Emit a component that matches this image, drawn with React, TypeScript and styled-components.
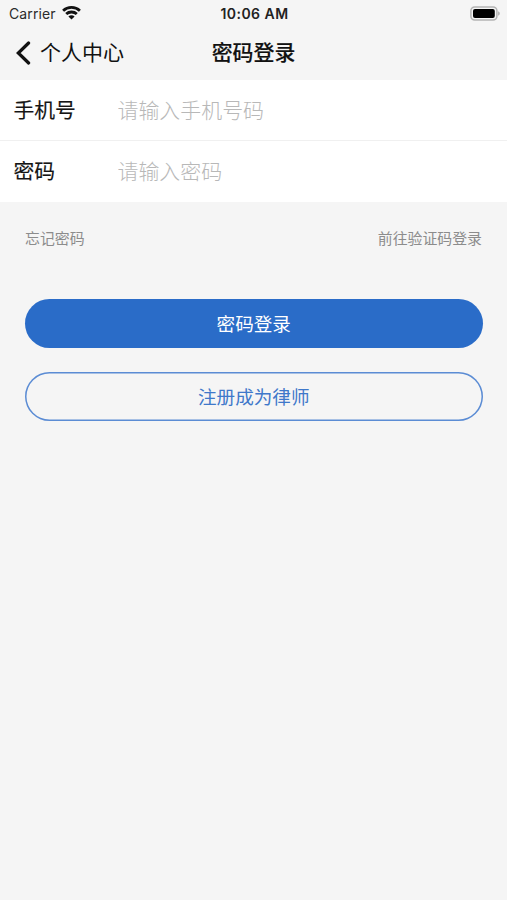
import React from "react";
import styled, { createGlobalStyle } from "styled-components";

const GlobalStyle = createGlobalStyle`
  *, *::before, *::after { box-sizing: border-box; }
  body {
    margin: 0;
    background: #f5f5f5;
    color: #151515;
    font-family: "Inter", "Noto Sans CJK SC", sans-serif;
  }
  button, input { font: inherit; }
`;

const Screen = styled.main`
  width: 100%;
  min-height: 900px;
  overflow: hidden;
  background: #f5f5f5;
`;

const StatusBar = styled.header`
  display: grid;
  grid-template-columns: 1fr auto 1fr;
  align-items: center;
  height: 27px;
  padding: 0 7px 0 9px;
`;

const Carrier = styled.div`
  display: flex;
  align-items: center;
  gap: 6px;
  font-size: 14px;
  line-height: 27px;
  letter-spacing: 0.1px;
  color: #2b2b2b;
  svg { margin-top: -1px; }
`;

const Clock = styled.time`
  padding-top: 1px;
  font-size: 14px;
  font-weight: 600;
  line-height: 26px;
  letter-spacing: 0.45px;
  color: #222;
`;

const BatteryIcon = styled.svg`
  display: block;
  justify-self: end;
`;

const NavBar = styled.nav`
  display: grid;
  grid-template-columns: 1fr auto 1fr;
  align-items: center;
  height: 53px;
  padding: 0 16px 1px;
`;

const BackButton = styled.button`
  display: flex;
  align-items: center;
  gap: 9px;
  padding: 0;
  border: 0;
  background: none;
  color: #111;
  font-size: 21px;
  line-height: 30px;
  svg { margin-top: -1px; }
`;

const Title = styled.h1`
  margin: 0;
  font-size: 20.9px;
  font-weight: 500;
  line-height: 30px;
  color: #111;
  -webkit-text-stroke: 0.15px currentColor;
`;

const Form = styled.form`
  background: #f5f5f5;
`;

const Fields = styled.div`
  background: #fff;
`;

const Field = styled.label`
  display: flex;
  align-items: center;
  height: 60px;
  padding-left: 13.5px;
  & + & {
    height: 62px;
    border-top: 1px solid #f0f0f0;
  }
`;

const FieldName = styled.span`
  width: 104px;
  font-size: 20.8px;
  line-height: 31px;
  -webkit-text-stroke: 0.15px currentColor;
`;

const FieldInput = styled.input`
  flex: 1;
  min-width: 0;
  height: 40px;
  padding: 0;
  border: 0;
  outline: 0;
  background: transparent;
  font-size: 20.95px;
  font-weight: 300;
  &::placeholder { color: #b8b8b8; opacity: 1; }
`;

const Links = styled.div`
  display: flex;
  justify-content: space-between;
  padding: 26px 25px 0;
`;

const TextLink = styled.a`
  font-size: 14.9px;
  line-height: 22px;
  color: #8c8c8c;
  text-decoration: none;
`;

const Actions = styled.div`
  display: flex;
  flex-direction: column;
  gap: 24px;
  padding: 49px 24.5px 0 25px;
`;

const ActionButton = styled.button<{ $filled?: boolean }>`
  height: 49px;
  padding: 0;
  border: 0;
  border-radius: 25px;
  background: ${({ $filled }) => ($filled ? "#2a6cc8" : "transparent")};
  box-shadow: ${({ $filled }) => ($filled ? "none" : "inset 0 0 0 1.5px #5b8cd4")};
  color: ${({ $filled }) => ($filled ? "#fff" : "#3f78ca")};
  font-size: 18.6px;
  line-height: 28px;
`;

const WifiIcon = () => (
  <svg width="19" height="16" viewBox="0 0 19 16" fill="none" stroke="#111" strokeWidth="2.8">
    <path d="M1.1 5.7C5.7 1.3 13.3 1.3 17.9 5.7" />
    <path d="M4.2 9.1c2.9-2.8 7.7-2.8 10.6 0" />
    <path d="M9.5 14.5 6.4 11.4c1.7-1.6 4.5-1.6 6.2 0Z" fill="#111" stroke="none" />
  </svg>
);

const ChevronIcon = () => (
  <svg width="15" height="24" viewBox="0 0 15 24" fill="none" stroke="#111" strokeWidth="3.2" strokeLinecap="round">
    <path d="M12.6 2 2.3 12 12.6 22" />
  </svg>
);

export default function App() {
  return (
    <Screen>
      <GlobalStyle />
      <StatusBar>
        <Carrier>
          Carrier
          <WifiIcon />
        </Carrier>
        <Clock>10:06 AM</Clock>
        <BatteryIcon width="30" height="15" viewBox="0 0 30 15">
          <rect x="0.9" y="1" width="26" height="13" rx="3.8" fill="#f5f5f5" stroke="#b4b4b4" strokeWidth="1.5" />
          <rect x="3" y="3" width="21.8" height="9" rx="2" fill="#000" />
          <path d="M28.2 5.3c2 .8 2 3.6 0 4.4Z" fill="#aaa" />
        </BatteryIcon>
      </StatusBar>
      <NavBar>
        <BackButton type="button">
          <ChevronIcon />
          个人中心
        </BackButton>
        <Title>密码登录</Title>
      </NavBar>
      <Form>
        <Fields>
          <Field>
            <FieldName>手机号</FieldName>
            <FieldInput type="tel" placeholder="请输入手机号码" />
          </Field>
          <Field>
            <FieldName>密码</FieldName>
            <FieldInput type="password" placeholder="请输入密码" />
          </Field>
        </Fields>
        <Links>
          <TextLink>忘记密码</TextLink>
          <TextLink>前往验证码登录</TextLink>
        </Links>
        <Actions>
          <ActionButton type="button" $filled>密码登录</ActionButton>
          <ActionButton type="button">注册成为律师</ActionButton>
        </Actions>
      </Form>
    </Screen>
  );
}
